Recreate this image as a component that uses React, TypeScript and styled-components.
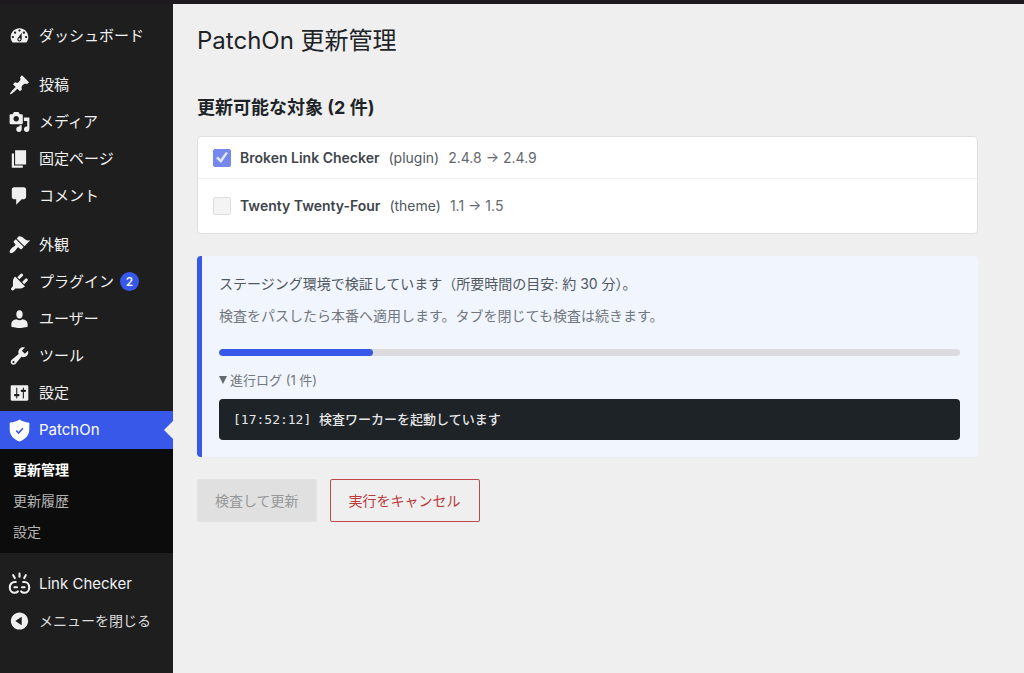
import React from "react";
import styled, { createGlobalStyle, css } from "styled-components";

const SANS = `Inter, "Noto Sans CJK JP", sans-serif`;
const MONO = `"DejaVu Sans Mono", "Noto Sans CJK JP", monospace`;

const GlobalStyle = createGlobalStyle`
  *, *::before, *::after { box-sizing: border-box; }
  body {
    margin: 0;
    background: #efefef;
    color: #1d2327;
    font-family: ${SANS};
    font-size: 14px;
    line-height: 20px;
  }
  ul, h1, h2, p, pre { margin: 0; padding: 0; }
  ul { list-style: none; }
`;

const Page = styled.div`
  display: flex;
  flex-direction: column;
  min-height: 100vh;
`;

const AdminBar = styled.header`
  height: 4px;
  background: #1d1a1d;
`;

const Body = styled.div`
  display: flex;
  flex: 1;
`;

const Sidebar = styled.nav`
  flex: none;
  width: 173px;
  padding: 13px 0 12px;
  background: #1e1e1e;
`;

const MenuGroup = styled.ul`
  & + & { margin-top: 12px; }
`;

const MenuLink = styled.a<{ $current?: boolean }>`
  position: relative;
  display: flex;
  align-items: center;
  gap: 8px;
  height: 37px;
  padding-left: 8px;
  color: #f0f0f1;
  font-size: 15px;
  text-decoration: none;
  white-space: nowrap;

  ${(p) =>
    p.$current &&
    css`
      height: 38px;
      background: #3858e9;
      color: #fff;
      &::after {
        content: "";
        position: absolute;
        right: 0;
        top: 10px;
        border: 9px solid transparent;
        border-left-width: 0;
        border-right-color: #efefef;
      }
    `}
`;

const CollapseButton = styled.button`
  display: flex;
  align-items: center;
  gap: 8px;
  width: 100%;
  height: 37px;
  padding: 0 0 0 8px;
  border: 0;
  background: none;
  color: #dcdcde;
  font: inherit;
  font-size: 14px;
  white-space: nowrap;
`;

const Icon = styled.svg`
  flex: none;
  width: 23px;
  height: 23px;
`;

const DashGlyph = styled.svg`
  flex: none;
  width: 23px;
  height: 22px;
  fill: #f0f0f1;
`;

const MenuText = styled.span`
  display: flex;
  align-items: center;
  gap: 6px;
`;

const Badge = styled.span`
  display: grid;
  place-items: center;
  width: 19px;
  height: 19px;
  border-radius: 10px;
  background: #3858e9;
  color: #fff;
  font-size: 12px;
  font-weight: 500;
`;

const Submenu = styled.ul`
  padding: 5px 0 6px;
  background: #0c0c0c;
`;

const SubLink = styled.a<{ $current?: boolean }>`
  display: block;
  padding-left: 13px;
  color: ${(p) => (p.$current ? "#fff" : "#b4b4b4")};
  font-size: 14px;
  font-weight: ${(p) => (p.$current ? 700 : 400)};
  line-height: 31px;
  text-decoration: none;
`;

const Main = styled.main`
  flex: 1;
  min-width: 0;
  padding: 20px 24px;
`;

const Content = styled.div`
  max-width: 781px;
`;

const PageTitle = styled.h1`
  font-size: 24px;
  font-weight: 400;
  line-height: 34px;
`;

const SectionTitle = styled.h2`
  margin-top: 36px;
  font-size: 18px;
  font-weight: 700;
  line-height: 28px;
`;

const TargetList = styled.ul`
  margin-top: 14px;
  border: 1px solid #dfdfe0;
  border-radius: 4px;
  background: #fff;
`;

const TargetRow = styled.li`
  padding: 10px 15px;
  & + & {
    padding: 16px 15px 17px;
    border-top: 1px solid #efefef;
  }
`;

const TargetLabel = styled.label`
  display: flex;
  align-items: center;
  gap: 9px;
  color: #50575e;
  line-height: 21px;
`;

const Checkbox = styled.input`
  appearance: none;
  display: grid;
  place-items: center;
  width: 18px;
  height: 18px;
  margin: 0;
  border: 1px solid #dddedf;
  border-radius: 2px;
  background: #f4f4f4;

  &:checked {
    border-color: #7488ee;
    background: #7488ee;
  }
  &:checked::before {
    content: "";
    width: 12px;
    height: 11px;
    background: #e4e8fc;
    clip-path: polygon(0 56%, 17% 42%, 38% 66%, 82% 0, 100% 10%, 42% 100%);
  }
`;

const TargetName = styled.strong`
  color: #3e454b;
  font-weight: 600;
`;

const Version = styled.span`
  color: #646970;
`;

const Notice = styled.section`
  margin-top: 22px;
  padding: 18px 18px 17px 17px;
  border-left: 5px solid #3858e9;
  border-radius: 4px;
  background: #f0f5fe;
`;

const NoticeText = styled.p<{ $muted?: boolean }>`
  color: ${(p) => (p.$muted ? "#72777d" : "#50575e")};
  & + & { margin-top: 12px; }
`;

const Track = styled.div`
  height: 7px;
  margin-top: 23px;
  border-radius: 4px;
  background: #dcdcde;
  overflow: hidden;
`;

const Fill = styled.div`
  height: 100%;
  border-radius: 4px;
  background: #3858e9;
`;

const Log = styled.details`
  margin-top: 14px;
`;

const LogSummary = styled.summary`
  display: flex;
  align-items: center;
  gap: 3px;
  color: #72777d;
  font-size: 13px;
  line-height: 20px;
`;

const Marker = styled.svg`
  width: 8px;
  height: 8px;
  fill: #646970;
`;

const LogOutput = styled.pre`
  margin-top: 9px;
  padding: 10px 14px;
  border-radius: 4px;
  background: #1d2327;
  color: #e6e6e7;
  font-family: ${MONO};
  font-size: 13px;
  font-weight: 500;
  line-height: 21px;
  white-space: pre-wrap;
`;

const Actions = styled.div`
  display: flex;
  gap: 13px;
  margin-top: 22px;
`;

const Button = styled.button`
  height: 43px;
  padding: 0 18px 2px;
  border: 1px solid #c0484a;
  border-radius: 2px;
  background: transparent;
  color: #b93a3b;
  font-family: inherit;
  font-size: 14px;

  &:disabled {
    padding: 0 17px 2px;
    border-color: #e2e2e2;
    background: #e0e0e0;
    color: #969799;
  }
`;

const PATHS = {
  dashboard:
    "M3.76 16h12.48c1.1-1.37 1.76-3.11 1.76-5 0-4.42-3.58-8-8-8s-8 3.58-8 8c0 1.89.66 3.63 1.76 5zM10 4c.55 0 1 .45 1 1s-.45 1-1 1-1-.45-1-1 .45-1 1-1zM6 6c.55 0 1 .45 1 1s-.45 1-1 1-1-.45-1-1 .45-1 1-1zm8 0c.55 0 1 .45 1 1s-.45 1-1 1-1-.45-1-1 .45-1 1-1zm-5.37 5.55L12 7v6c0 1.1-.9 2-2 2s-2-.9-2-2c0-.57.24-1.08.63-1.45zM4 10c.55 0 1 .45 1 1s-.45 1-1 1-1-.45-1-1 .45-1 1-1zm12 0c.55 0 1 .45 1 1s-.45 1-1 1-1-.45-1-1 .45-1 1-1zm-5 3c0-.55-.45-1-1-1s-1 .45-1 1 .45 1 1 1 1-.45 1-1z",
  post: "M10.44 3.02l1.82-1.82 6.36 6.35-1.83 1.82c-1.05-.68-2.48-.57-3.41.36l-.75.75c-.92.93-1.04 2.35-.35 3.41l-1.83 1.82-2.41-2.41-2.8 2.79c-.42.42-3.38 2.71-3.8 2.29s1.86-3.39 2.28-3.81l2.79-2.79L4.1 9.36l1.83-1.82c1.05.69 2.48.57 3.4-.36l.75-.75c.93-.92 1.05-2.35.36-3.41z",
  media:
    "M13 11V4c0-.55-.45-1-1-1h-1.67L9 1H5L3.67 3H2c-.55 0-1 .45-1 1v7c0 .55.45 1 1 1h10c.55 0 1-.45 1-1zM7 4.5c1.38 0 2.5 1.12 2.5 2.5S8.38 9.5 7 9.5 4.5 8.38 4.5 7 5.62 4.5 7 4.5zM14 6h5v10.5c0 1.38-1.12 2.5-2.5 2.5S14 17.88 14 16.5s1.12-2.5 2.5-2.5c.17 0 .34.02.5.05V9h-3V6zm-4 8.05V13h2v3.5c0 1.38-1.12 2.5-2.5 2.5S7 17.88 7 16.5 8.12 14 9.5 14c.17 0 .34.02.5.05z",
  page: "M6 15V2h10v13H6zm-1 1h8v2H3V5h2v11z",
  comments:
    "M5 2h9c1.1 0 2 .9 2 2v7c0 1.1-.9 2-2 2h-2l-5 5v-5H5c-1.1 0-2-.9-2-2V4c0-1.1.9-2 2-2z",
  appearance:
    "M14.48 11.06L7.41 3.99l1.5-1.5c.5-.56 2.3-.47 3.51.32 1.21.8 1.43 1.28 2.91 2.1 1.18.64 2.45 1.26 4.45.85zm-.71.71L6.7 4.7 4.93 6.47c-.39.39-.39 1.02 0 1.41l1.06 1.06c.39.39.39 1.03 0 1.42-.6.6-1.43 1.11-2.21 1.69-.35.26-.7.53-1.01.84C1.43 14.23.4 16.08 1.4 17.07c.99 1 2.84-.03 4.18-1.36.31-.31.58-.66.85-1.02.57-.78 1.08-1.61 1.69-2.21.39-.39 1.02-.39 1.41 0l1.06 1.06c.39.39 1.02.39 1.41 0z",
  plugins:
    "M13.11 4.36L9.87 7.6 8 5.73l3.24-3.24c.35-.34 1.05-.2 1.56.32.52.51.66 1.21.31 1.55zm-8 1.77l.91-1.12 9.01 9.01-1.19.84c-.71.71-2.63 1.16-3.82 1.16H6.14L4.9 17.26c-.59.59-1.54.59-2.12 0-.59-.58-.59-1.53 0-2.12l1.24-1.24v-3.88c0-1.13.4-3.19 1.09-3.89zm7.26 3.97l3.24-3.24c.34-.35 1.04-.21 1.55.31.52.51.66 1.21.31 1.55l-3.24 3.25z",
  users:
    "M10 9.5c-2.1 0-2.9-2-2.9-3.9C7.1 3.6 8 2 10 2s2.900 1.600 2.900 3.600c0 1.900-.8 3.900-2.900 3.900zM7.300 10.200c.8.600 1.700.900 2.700.900s1.900-.3 2.700-.9c2.700.100 4.700 2.100 4.700 4.500v2.400s-3.700 1.100-7.400 1.100-7.400-1.100-7.400-1.100v-2.400c0-2.400 2-4.400 4.700-4.500z",
  tools:
    "M16.68 9.77c-1.34 1.34-3.3 1.67-4.95.99l-5.41 6.52c-.99.99-2.59.99-3.58 0s-.99-2.59 0-3.57l6.52-5.42c-.68-1.65-.35-3.61.99-4.95 1.28-1.28 3.12-1.62 4.72-1.06l-2.89 2.89 2.82 2.82 2.86-2.87c.53 1.58.18 3.39-1.08 4.65zM3.81 16.21c.4.39 1.04.39 1.43 0 .4-.4.4-1.04 0-1.43-.39-.4-1.03-.4-1.43 0-.39.39-.39 1.03 0 1.43z",
  settings:
    "M18 16V4c0-.55-.45-1-1-1H3c-.55 0-1 .45-1 1v12c0 .55.45 1 1 1h14c.55 0 1-.45 1-1zM8 11h1c.55 0 1 .45 1 1s-.45 1-1 1H8v1.5c0 .28-.22.5-.5.5s-.5-.22-.5-.5V13H6c-.55 0-1-.45-1-1s.45-1 1-1h1V5.5c0-.28.22-.5.5-.5s.5.22.5.5V11zm5-2h-1c-.55 0-1-.45-1-1s.45-1 1-1h1V5.5c0-.28.22-.5.5-.5s.5.22.5.5V7h1c.55 0 1 .45 1 1s-.45 1-1 1h-1v5.5c0 .28-.22.5-.5.5s-.5-.22-.5-.5V9z",
  collapse:
    "M10 2.16c4.33 0 7.84 3.51 7.84 7.84s-3.51 7.84-7.84 7.84S2.16 14.33 2.16 10 5.71 2.16 10 2.16zm2 11.72V6.12L6.18 9.97z",
};

type GlyphName = keyof typeof PATHS;

const Glyph = ({ name }: { name: GlyphName }) => (
  <DashGlyph viewBox="0 0 20 20" aria-hidden="true">
    <path fillRule="evenodd" d={PATHS[name]} />
  </DashGlyph>
);

const ShieldIcon = () => (
  <Icon viewBox="0 0 23 23" aria-hidden="true">
    <path
      fill="#fff"
      d="M11.5.4c2.7 1.7 5.8 2.7 9 3 .4 0 .8.4.8.8v6.3c0 5.7-4 10-9.8 12.1C5.7 20.5 1.7 16.2 1.7 10.5V4.2c0-.4.4-.8.8-.8 3.2-.3 6.3-1.3 9-3z"
    />
    <path d="M8.3 11.7l2.3 2.3 4.3-4.7" fill="none" stroke="#3858e9" strokeWidth="1.7" />
  </Icon>
);

const BrokenLinkIcon = () => (
  <Icon viewBox="0 0 23 23" fill="none" stroke="#f0f0f1" strokeWidth="2.1" strokeLinecap="round" aria-hidden="true">
    <path d="M11.5 1.5v3.3M5.2 3.2l1.6 2.9M17.8 3.2l-1.6 2.9" />
    <path d="M7.8 10H6.6C4 10 1.8 12.3 1.8 15.4s2.2 5.4 4.8 5.4c1.4 0 2.500-.4 3.300-1.500M6.400 15.300h2.600" />
    <path d="M15.200 10h1.200c2.600 0 4.800 2.300 4.800 5.400s-2.200 5.400-4.800 5.400c-1.400 0-2.500-.4-3.300-1.500M16.600 15.300h-2.600" />
  </Icon>
);

interface Item {
  label: string;
  icon: GlyphName;
  count?: number;
}

const contentItems: Item[] = [
  { label: "投稿", icon: "post" },
  { label: "メディア", icon: "media" },
  { label: "固定ページ", icon: "page" },
  { label: "コメント", icon: "comments" },
];

const siteItems: Item[] = [
  { label: "外観", icon: "appearance" },
  { label: "プラグイン", icon: "plugins", count: 2 },
  { label: "ユーザー", icon: "users" },
  { label: "ツール", icon: "tools" },
  { label: "設定", icon: "settings" },
];

const targets = [
  { name: "Broken Link Checker", kind: "plugin", from: "2.4.8", to: "2.4.9", checked: true },
  { name: "Twenty Twenty-Four", kind: "theme", from: "1.1", to: "1.5", checked: false },
];

const progress = { value: 5, max: 24 };

const MenuItem = ({ label, icon, count }: Item) => (
  <li>
    <MenuLink href="#">
      <Glyph name={icon} />
      <MenuText>
        {label}
        {count !== undefined && <Badge>{count}</Badge>}
      </MenuText>
    </MenuLink>
  </li>
);

export default function App() {
  return (
    <Page>
      <GlobalStyle />
      <AdminBar />
      <Body>
        <Sidebar>
          <MenuGroup>
            <MenuItem label="ダッシュボード" icon="dashboard" />
          </MenuGroup>
          <MenuGroup>
            {contentItems.map((item) => (
              <MenuItem key={item.icon} {...item} />
            ))}
          </MenuGroup>
          <MenuGroup>
            {siteItems.map((item) => (
              <MenuItem key={item.icon} {...item} />
            ))}
            <li>
              <MenuLink href="#" $current aria-current="true">
                <ShieldIcon />
                PatchOn
              </MenuLink>
              <Submenu>
                <li><SubLink href="#" $current aria-current="page">更新管理</SubLink></li>
                <li><SubLink href="#">更新履歴</SubLink></li>
                <li><SubLink href="#">設定</SubLink></li>
              </Submenu>
            </li>
          </MenuGroup>
          <MenuGroup>
            <li>
              <MenuLink href="#">
                <BrokenLinkIcon />
                Link Checker
              </MenuLink>
            </li>
            <li>
              <CollapseButton type="button">
                <Glyph name="collapse" />
                メニューを閉じる
              </CollapseButton>
            </li>
          </MenuGroup>
        </Sidebar>
        <Main>
          <Content>
            <PageTitle>PatchOn 更新管理</PageTitle>
            <SectionTitle>更新可能な対象 (2 件)</SectionTitle>
            <TargetList>
              {targets.map((t) => (
                <TargetRow key={t.name}>
                  <TargetLabel>
                    <Checkbox type="checkbox" defaultChecked={t.checked} disabled />
                    <TargetName>{t.name}</TargetName>
                    <span>({t.kind})</span>
                    <Version>{t.from} → {t.to}</Version>
                  </TargetLabel>
                </TargetRow>
              ))}
            </TargetList>
            <Notice>
              <NoticeText>ステージング環境で検証しています（所要時間の目安: 約 30 分）。</NoticeText>
              <NoticeText $muted>検査をパスしたら本番へ適用します。タブを閉じても検査は続きます。</NoticeText>
              <Track
                role="progressbar"
                aria-label="検証の進行状況"
                aria-valuenow={progress.value}
                aria-valuemax={progress.max}
              >
                <Fill style={{ width: `${(progress.value / progress.max) * 100}%` }} />
              </Track>
              <Log open>
                <LogSummary>
                  <Marker viewBox="0 0 8 8" aria-hidden="true"><path d="M0 0h8L4 8z" /></Marker>
                  進行ログ (1 件)
                </LogSummary>
                <LogOutput>[17:52:12] 検査ワーカーを起動しています</LogOutput>
              </Log>
            </Notice>
            <Actions>
              <Button type="button" disabled>検査して更新</Button>
              <Button type="button">実行をキャンセル</Button>
            </Actions>
          </Content>
        </Main>
      </Body>
    </Page>
  );
}
